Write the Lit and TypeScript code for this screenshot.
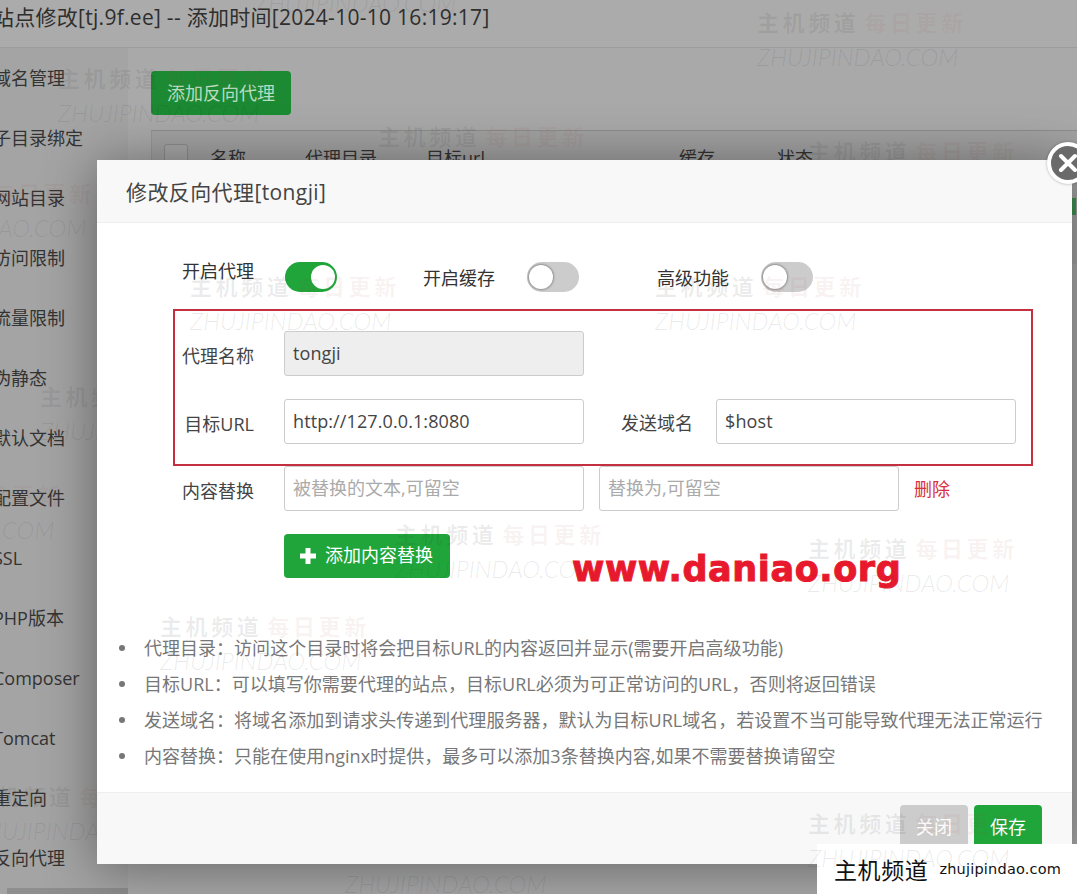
import { LitElement, html, css } from "lit";
import { customElement } from "lit/decorators.js";

const under: [number, number][] = [
  [757, 9], [58, 65], [378, 123], [808, 138], [-115, 180], [40, 383], [-147, 482], [-28, 783], [345, 836], [255, -45],
];
const over: [number, number][] = [
  [190, 273], [655, 273], [395, 521], [808, 535], [160, 613], [808, 810],
];
const side = ["域名管理", "子目录绑定", "网站目录", "访问限制", "流量限制", "伪静态", "默认文档", "配置文件", "SSL", "PHP版本", "Composer", "Tomcat", "重定向", "反向代理"];
const hints = [
  "代理目录：访问这个目录时将会把目标URL的内容返回并显示(需要开启高级功能)",
  "目标URL：可以填写你需要代理的站点，目标URL必须为可正常访问的URL，否则将返回错误",
  "发送域名：将域名添加到请求头传递到代理服务器，默认为目标URL域名，若设置不当可能导致代理无法正常运行",
  "内容替换：只能在使用nginx时提供，最多可以添加3条替换内容,如果不需要替换请留空",
];
const wm = (p: [number, number]) => html`<div class="wm" style="left:${p[0]}px;top:${p[1]}px">
  <div class="cn"><span class="a">主机频道</span><span class="b">每日更新</span></div>
  <div class="en">ZHUJIPINDAO.COM</div>
</div>`;

@customElement("app-root")
export class AppRoot extends LitElement {
  static styles = css`
    :host { display: block; position: relative; width: 1077px; height: 894px; overflow: hidden;
      font-family: "Open Sans", "Noto Sans CJK SC", sans-serif; font-size: 18px; color: #444; background: #a6a6a6; }
    .page { display: flex; flex-direction: column; height: 894px; }
    .top { height: 47px; flex: none; border-bottom: 1px solid #9c9c9c; background: #ababab; color: #2e2e2e;
      font-size: 21px; letter-spacing: .28px; line-height: 34px; white-space: nowrap; text-indent: -7px; }
    .rest { flex: 1; display: flex; min-height: 0; }
    .side { width: 128px; flex: none; background: #a4a4a4; overflow: hidden; color: #333; position: relative; }
    .side div { height: 60px; line-height: 60px; margin-left: -7px; white-space: nowrap; }
    .side .active { position: absolute; left: 7px; right: 0; top: 840px; height: 20px; background: #8e8e8e; }
    .main { flex: 1; padding: 23px 0 0 23px; background: #a9a9a9; }
    .add { width: 140px; height: 44px; border-radius: 4px; background: #1c8a33; color: #b9dcc0; text-align: center; line-height: 44px; }
    .tbl { margin-top: 15px; height: 120px; border-top: 1px solid #8d8d8d; border-left: 1px solid #979797; padding: 13px 0 0 12px;
      display: grid; grid-template-columns: 46px 95px 121px 253px 98px 1fr; align-items: start; color: #333; background: #a2a2a2; }
    .cb { width: 22px; height: 22px; border: 1px solid #8c8c8c; border-radius: 3px; background: #a7a7a7; }
    .tbl span { line-height: 24px; margin-top: 2px; }
    .sliver { position: absolute; left: 1072px; top: 198px; width: 4px; height: 17px; background: #3f9150; }

    .dlg { position: absolute; left: 97px; top: 160px; width: 975px; height: 704px; display: flex; flex-direction: column;
      background: #fff; box-shadow: 0 4px 55px rgba(0,0,0,.42); border-radius: 2px 0 0 0; }
    .dh { height: 62px; flex: none; box-sizing: content-box; border-bottom: 1px solid #eee; background: #f8f8f8;
      padding-left: 29px; font-size: 21px; letter-spacing: .4px; line-height: 64px; color: #444; }
    .db { flex: 1; min-height: 0; position: relative; padding-top: 39px; }
    .toggles { display: flex; align-items: center; margin-left: 85px; height: 30px; }
    .toggles .first { align-self: flex-start; line-height: 18px; color: #333; }
    .toggles span { color: #333; }
    .sw { width: 52px; height: 30px; border-radius: 15px; background: #ccc; position: relative; flex: none; box-sizing: border-box; }
    .sw::after { content: ""; position: absolute; left: 2px; top: 3px; width: 24px; height: 24px; border-radius: 50%; background: #fff;
      box-shadow: 0 0 2px 1px rgba(0,0,0,.3); }
    .sw.on { background: #20a53a; margin: 0 86px 0 31px; }
    .sw.on::after { left: 26px; box-shadow: none; }
    .sw.m1 { margin: 0 78px 0 32px; }
    .sw.m2 { margin-left: 32px; }
    .form { margin-top: 39px; display: flex; flex-direction: column; gap: 23px; }
    .row { display: flex; align-items: center; height: 45px; margin-left: 85px; }
    .row.r3 { margin-top: -1px; }
    .lab { width: 72px; text-align: right; margin-right: 30px; flex: none; color: #444; padding-top: 2px; }
    .lab.l2 { margin: 0 23px 0 37px; padding-top: 0; }
    input { width: 300px; height: 45px; box-sizing: border-box; border: 1px solid #ccc; border-radius: 3px; padding: 0 8px 2px;
      font: inherit; letter-spacing: .1px; color: #444; background: #fff; outline: none; flex: none; margin: 0; }
    input[readonly].ro { background: #eee; }
    input::placeholder { color: #aaa; opacity: 1; letter-spacing: 0; }
    .gap { margin-left: 15px; }
    .del { margin-left: 15px; color: #d9303e; font-size: 18px; margin-top: -2px; }
    .addc { margin: 23px 0 0 187px; width: 166px; height: 44px; border-radius: 4px; background: #20a53a; color: #fff;
      display: flex; align-items: center; padding: 0 0 4px 16px; box-sizing: border-box; gap: 9px; }
    .addc svg { display: block; margin-top: 3px; }
    ul { margin: 52px 0 0; padding: 0 0 0 47px; color: #777; line-height: 36px; white-space: nowrap; list-style: none; }
    li { position: relative; letter-spacing: .02px; }
    li::before { content: ""; position: absolute; left: -25px; top: 15px; width: 6px; height: 6px; border-radius: 50%; background: #777; }
    .df { height: 59px; flex: none; border-top: 1px solid #eee; background: #f8f8f8; display: flex; justify-content: flex-end;
      padding: 12px 30px 0 0; gap: 6px; box-sizing: content-box; }
    .btn { width: 68px; height: 44px; border-radius: 4px; color: #fff; text-align: center; line-height: 45px; background: #20a53a; }
    .btn.gray { background: #ccc; }

    .redbox { position: absolute; left: 173px; top: 309px; width: 860px; height: 157px; box-sizing: border-box; border: 2.5px solid #c4303f; }
    .close { position: absolute; left: 1047px; top: 142px; width: 42px; height: 42px; box-sizing: border-box; border-radius: 50%;
      border: 4px solid #fff; background: #6a6a6a; box-shadow: 0 0 3px rgba(0,0,0,.3); display: flex; align-items: center; justify-content: center; }
    .dan { position: absolute; left: 572px; top: 547px; font: 700 35px/44px "DejaVu Sans", sans-serif; color: #e8192c;
      -webkit-text-stroke: 1px #e8192c; white-space: nowrap; letter-spacing: 0.6px; }
    .brand { position: absolute; left: 817px; top: 844px; width: 260px; height: 50px; background: #fff; display: flex; align-items: center;
      padding-left: 17px; box-sizing: border-box; color: #111; gap: 11px; white-space: nowrap; }
    .brand b { font: 400 23px/1 "Noto Sans CJK SC", sans-serif; letter-spacing: 0.6px; }
    .brand i { font: 400 14.5px/1 "DejaVu Sans", sans-serif; letter-spacing: .2px; }

    .wm { position: absolute; width: 230px; pointer-events: none; white-space: nowrap; }
    .cn { height: 30px; margin-top: -3px; line-height: 30px; font-size: 22px; letter-spacing: 3.6px; font-family: "Noto Sans CJK SC", sans-serif; display: flex; gap: 5px; }
    .cn .a { font-weight: 700; color: rgba(50,50,50,.09); }
    .cn .b { font-weight: 700; color: rgba(160,60,60,.07); }
    .en { margin-top: 9px; font: italic 300 24px/24px "Lato", sans-serif; color: rgba(40,40,60,.10); }
  `;

  render() {
    return html`
      <div class="page">
        <div class="top">站点修改[tj.9f.ee] -- 添加时间[2024-10-10 16:19:17]</div>
        <div class="rest">
          <div class="side">${side.map((s) => html`<div>${s}</div>`)}<span class="active"></span></div>
          <div class="main">
            <div class="add">添加反向代理</div>
            <div class="tbl">
              <div class="cb"></div><span>名称</span><span>代理目录</span><span>目标url</span><span>缓存</span><span>状态</span>
            </div>
          </div>
        </div>
      </div>
      <div class="sliver"></div>
      ${under.map(wm)}
      <div class="dlg">
        <div class="dh">修改反向代理[tongji]</div>
        <div class="db">
          <div class="toggles">
            <span class="first">开启代理</span><div class="sw on"></div>
            <span>开启缓存</span><div class="sw m1"></div>
            <span>高级功能</span><div class="sw m2"></div>
          </div>
          <div class="form">
            <div class="row"><div class="lab">代理名称</div><input class="ro" readonly value="tongji" /></div>
            <div class="row"><div class="lab">目标URL</div><input value="http://127.0.0.1:8080" />
              <div class="lab l2">发送域名</div><input value="$host" /></div>
            <div class="row r3"><div class="lab">内容替换</div><input placeholder="被替换的文本,可留空" />
              <input class="gap" placeholder="替换为,可留空" /><span class="del">删除</span></div>
          </div>
          <div class="addc">
            <svg width="16" height="16" viewBox="0 0 16 16"><path d="M5.5 0h5v5.5H16v5h-5.5V16h-5v-5.5H0v-5h5.5z" fill="#fff"/></svg>
            <span>添加内容替换</span>
          </div>
          <ul>${hints.map((h) => html`<li>${h}</li>`)}</ul>
        </div>
        <div class="df"><div class="btn gray">关闭</div><div class="btn">保存</div></div>
      </div>
      <div class="redbox"></div>
      <div class="close">
        <svg width="20" height="20" viewBox="0 0 20 20"><path d="M3 3l14 14M17 3L3 17" stroke="#fff" stroke-width="4" stroke-linecap="round"/></svg>
      </div>
      <div class="dan">www.daniao.org</div>
      <div class="brand"><b>主机频道</b><i>zhujipindao.com</i></div>
      ${over.map(wm)}
    `;
  }
}
